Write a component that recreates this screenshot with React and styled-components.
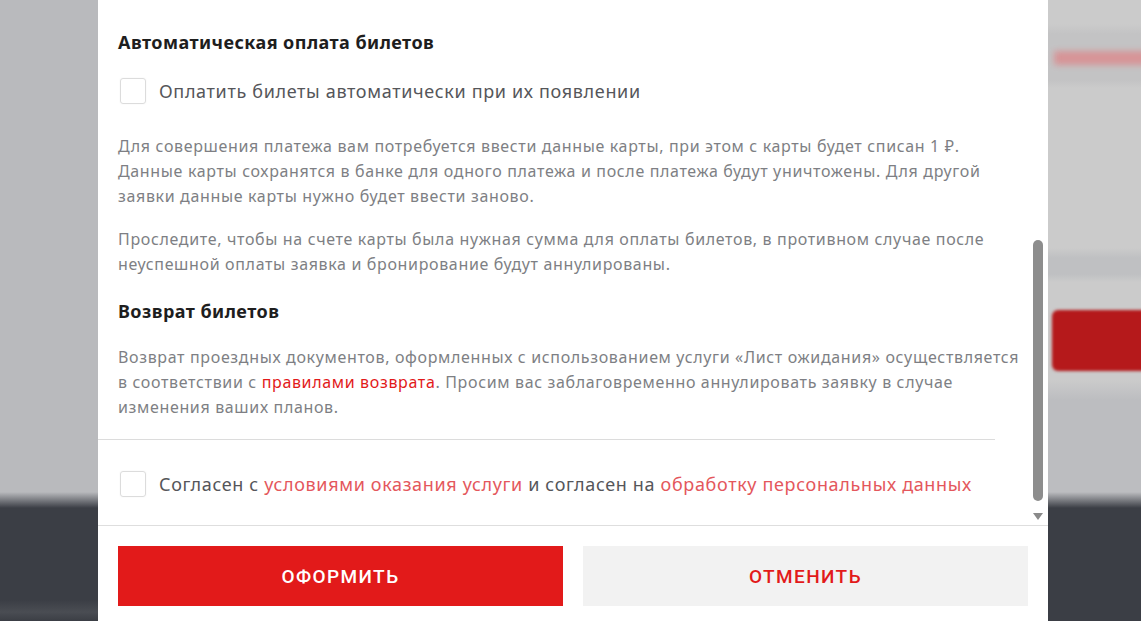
import React from 'react';
import styled, { createGlobalStyle } from 'styled-components';

const GlobalStyle = createGlobalStyle`
  html, body {
    margin: 0;
    padding: 0;
    height: 100%;
    overflow: hidden;
  }
  body {
    font-family: "Noto Sans", "Open Sans", Arial, sans-serif;
  }
  #root {
    height: 100%;
  }
`;

const Screen = styled.div`
  display: flex;
  width: 1141px;
  height: 621px;
  overflow: hidden;
`;

const LeftBackdrop = styled.div`
  width: 98px;
  flex-shrink: 0;
  background: linear-gradient(
    to bottom,
    #b9babd 0px,
    #b9babd 492px,
    #3b3e45 508px,
    #3b3e45 600px,
    #4a4d53 612px,
    #3b3e45 621px
  );
`;

const RightBackdrop = styled.div`
  flex: 1;
  display: flex;
  flex-direction: column;
  background: linear-gradient(
    to bottom,
    #cbcbcb 0px,
    #cbcbcb 24px,
    #c3c3c4 34px,
    #c3c3c4 80px,
    #cbcbcb 88px,
    #cbcbcb 248px,
    #bfc0c2 258px,
    #bfc0c2 274px,
    #cbcbcb 282px,
    #cbcbcb 380px,
    #bcbdc0 400px,
    #bcbdc0 492px,
    #3b3e45 508px,
    #3b3e45 621px
  );
`;

const BlurText = styled.div`
  margin: 51px 0 0 6px;
  height: 14px;
  width: 120px;
  background: #d98f92;
  filter: blur(3px);
  opacity: 0.9;
`;

const BlurButton = styled.div`
  margin: 245px 0 0 4px;
  height: 61px;
  border-radius: 6px 0 0 6px;
  background: #b5191b;
  filter: blur(1.5px);
`;

const Modal = styled.div`
  width: 950px;
  flex-shrink: 0;
  background: #fff;
  display: flex;
  flex-direction: column;
`;

const ScrollArea = styled.div`
  position: relative;
  height: 526px;
  border-bottom: 1px solid #dedede;
  box-sizing: border-box;
  overflow: hidden;
`;

const Content = styled.div`
  padding: 30px 27px 0 20px;
`;

const Heading = styled.h3`
  margin: 0;
  font-size: 18px;
  line-height: 24px;
  font-weight: 700;
  letter-spacing: 0.45px;
  color: #1e1e1e;
  margin-bottom: ${(p) => p.$gap || 0}px;
`;

const CheckRow = styled.label`
  display: flex;
  align-items: center;
  gap: 13px;
  padding-left: 2px;
  font-size: 18px;
  line-height: 26px;
  letter-spacing: 0.65px;
  color: #55565a;
  margin-top: ${(p) => p.$top || 0}px;
  margin-bottom: ${(p) => p.$gap || 0}px;
`;

const Box = styled.span`
  width: 24px;
  height: 24px;
  flex-shrink: 0;
  border: 1px solid #dcdcdc;
  border-radius: 3px;
  box-shadow: 0 0 2px rgba(0, 0, 0, 0.06);
`;

const Para = styled.p`
  margin: 0 0 ${(p) => p.$gap || 0}px;
  font-size: 16px;
  line-height: 25px;
  letter-spacing: 0.65px;
  color: #7e7f84;
`;

const StrongLink = styled.a`
  color: #e21a1a;
  text-decoration: none;
`;

const SoftLink = styled.a`
  color: #e4575c;
  text-decoration: none;
`;

const Divider = styled.hr`
  margin: 0 26px 0 -20px;
  border: none;
  border-top: 1px solid #dcdcdc;
`;

const ScrollThumb = styled.div`
  position: absolute;
  left: 935px;
  top: 240px;
  width: 10px;
  height: 261px;
  border-radius: 5px;
  background: #8d8d8d;
`;

const ScrollArrow = styled.div`
  position: absolute;
  left: 935px;
  top: 513px;
  width: 0;
  height: 0;
  border-left: 5px solid transparent;
  border-right: 5px solid transparent;
  border-top: 7px solid #8a8a8a;
`;

const Footer = styled.div`
  display: flex;
  gap: 20px;
  padding: 20px 20px 0;
`;

const Button = styled.button`
  flex: 1;
  height: 60px;
  border: none;
  border-radius: 0;
  font-family: Roboto, "Noto Sans", sans-serif;
  font-size: 19px;
  font-weight: 500;
  letter-spacing: 1.4px;
  text-transform: uppercase;
  cursor: pointer;
  background: ${(p) => (p.$primary ? '#e21a1a' : '#f2f2f2')};
  color: ${(p) => (p.$primary ? '#fff' : '#e21a1a')};
`;

export default function App() {
  return (
    <>
      <GlobalStyle />
      <Screen>
        <LeftBackdrop />
        <Modal>
          <ScrollArea>
            <Content>
              <Heading $gap={24}>Автоматическая оплата билетов</Heading>
              <CheckRow $gap={30}>
                <Box />
                Оплатить билеты автоматически при их появлении
              </CheckRow>
              <Para $gap={18}>
                Для совершения платежа вам потребуется ввести данные карты, при этом с карты будет списан 1 ₽.
                Данные карты сохранятся в банке для одного платежа и после платежа будут уничтожены. Для другой
                заявки данные карты нужно будет ввести заново.
              </Para>
              <Para $gap={22}>
                Проследите, чтобы на счете карты была нужная сумма для оплаты билетов, в противном случае после
                неуспешной оплаты заявка и бронирование будут аннулированы.
              </Para>
              <Heading $gap={22}>Возврат билетов</Heading>
              <Para $gap={19}>
                Возврат проездных документов, оформленных с использованием услуги «Лист ожидания» осуществляется
                в соответствии с <StrongLink href="#">правилами возврата</StrongLink>. Просим вас заблаговременно
                аннулировать заявку в случае изменения ваших планов.
              </Para>
              <Divider />
              <CheckRow $top={31}>
                <Box />
                <span>
                  Согласен с <SoftLink href="#">условиями оказания услуги</SoftLink> и согласен на{' '}
                  <SoftLink href="#">обработку персональных данных</SoftLink>
                </span>
              </CheckRow>
            </Content>
            <ScrollThumb />
            <ScrollArrow />
          </ScrollArea>
          <Footer>
            <Button $primary>Оформить</Button>
            <Button>Отменить</Button>
          </Footer>
        </Modal>
        <RightBackdrop>
          <BlurText />
          <BlurButton />
        </RightBackdrop>
      </Screen>
    </>
  );
}
